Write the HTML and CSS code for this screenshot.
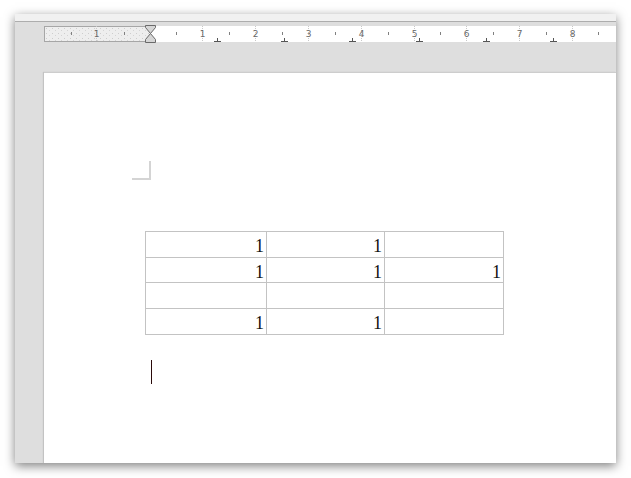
FILE: index.html
```html
<!DOCTYPE html>
<html>
<head>
<meta charset="utf-8">
<link rel="stylesheet" href="styles.css">
</head>
<body>
<div class="window">
  <div class="topstrip"></div>
  <div class="rulerrow">
    <svg class="ruler" width="572" height="22" viewBox="0 0 572 22">
      <defs>
        <pattern id="dots" width="6" height="5" patternUnits="userSpaceOnUse">
          <rect x="2" y="1" width="1" height="1" fill="#cdcdcd"/>
          <rect x="5" y="3" width="1" height="1" fill="#d4d4d4"/>
        </pattern>
      </defs>
      <rect x="0" y="4" width="572" height="16" fill="#ffffff"/>
      <rect x="0.5" y="4.5" width="106" height="15" fill="#eeeeee" stroke="#a6a6a6"/>
      <rect x="1" y="5" width="105" height="14" fill="url(#dots)"/>
      <g stroke="#c8c8c8" stroke-dasharray="1 1">
        <line x1="52.5" y1="4" x2="52.5" y2="20"/>
        <line x1="158.5" y1="4" x2="158.5" y2="20"/>
        <line x1="211.5" y1="4" x2="211.5" y2="20"/>
        <line x1="264.5" y1="4" x2="264.5" y2="20"/>
        <line x1="317.5" y1="4" x2="317.5" y2="20"/>
        <line x1="370.5" y1="4" x2="370.5" y2="20"/>
        <line x1="422.5" y1="4" x2="422.5" y2="20"/>
        <line x1="475.5" y1="4" x2="475.5" y2="20"/>
        <line x1="528.5" y1="4" x2="528.5" y2="20"/>
      </g>
      <g stroke="#808080">
        <line x1="27.5" y1="10" x2="27.5" y2="13"/>
        <line x1="80.5" y1="10" x2="80.5" y2="13"/>
        <line x1="132.5" y1="10" x2="132.5" y2="13"/>
        <line x1="185.5" y1="10" x2="185.5" y2="13"/>
        <line x1="238.5" y1="10" x2="238.5" y2="13"/>
        <line x1="291.5" y1="10" x2="291.5" y2="13"/>
        <line x1="344.5" y1="10" x2="344.5" y2="13"/>
        <line x1="396.5" y1="10" x2="396.5" y2="13"/>
        <line x1="449.5" y1="10" x2="449.5" y2="13"/>
        <line x1="502.5" y1="10" x2="502.5" y2="13"/>
        <line x1="554.5" y1="10" x2="554.5" y2="13"/>
      </g>
      <g class="rnum" text-anchor="middle">
        <text x="52.5" y="14.5">1</text>
        <text x="158.5" y="14.5">1</text>
        <text x="211.5" y="14.5">2</text>
        <text x="264.5" y="14.5">3</text>
        <text x="317.5" y="14.5">4</text>
        <text x="370.5" y="14.5">5</text>
        <text x="422.5" y="14.5">6</text>
        <text x="475.5" y="14.5">7</text>
        <text x="528.5" y="14.5">8</text>
      </g>
      <g stroke="#555555" fill="none">
        <path d="M173.5 16v3.5M170 19.5h7"/>
        <path d="M240.5 16v3.5M237 19.5h7"/>
        <path d="M308.5 16v3.5M305 19.5h7"/>
        <path d="M375.5 16v3.5M372 19.5h7"/>
        <path d="M442.5 16v3.5M439 19.5h7"/>
        <path d="M509.5 16v3.5M506 19.5h7"/>
      </g>
      <polygon points="101.5,3.5 111.5,3.5 111.5,5.5 106.5,11.5 101.5,5.5" fill="#d6d6d6" stroke="#6a6a6a"/>
      <polygon points="106.5,11.5 111.5,17.5 111.5,20.5 101.5,20.5 101.5,17.5" fill="#d6d6d6" stroke="#6a6a6a"/>
    </svg>
  </div>
  <div class="gap"></div>
  <div class="pagerow">
    <div class="page">
      <div class="corner"></div>
      <div class="grid">
        <div class="cell">1</div><div class="cell">1</div><div class="cell"></div>
        <div class="cell">1</div><div class="cell">1</div><div class="cell">1</div>
        <div class="cell"></div><div class="cell"></div><div class="cell"></div>
        <div class="cell">1</div><div class="cell">1</div><div class="cell"></div>
      </div>
      <div class="caret"></div>
    </div>
  </div>
</div>
</body>
</html>
```

FILE: styles.css
```css
html, body {
  margin: 0;
  padding: 0;
  background: #ffffff;
}
body {
  width: 631px;
  height: 478px;
  overflow: hidden;
  padding-top: 14px;
  padding-left: 15px;
  box-sizing: border-box;
}
.window {
  width: 601px;
  height: 449px;
  background: #dedede;
  box-shadow: 0 3px 10px rgba(0, 0, 0, 0.5);
  overflow: hidden;
}
.topstrip {
  height: 7px;
  background: #f1f1f1;
  border-bottom: 1px solid #adadad;
}
.rulerrow {
  height: 22px;
  padding-left: 29px;
}
.ruler {
  display: block;
}
.rnum {
  font-family: "DejaVu Sans", sans-serif;
  font-size: 9px;
  fill: #6a6a6a;
}
.gap {
  height: 28px;
}
.pagerow {
  padding-left: 29px;
  height: 391px;
}
.page {
  width: 572px;
  height: 391px;
  background: #ffffff;
  box-sizing: border-box;
  border-top: 1px solid #cdcdcd;
  padding-top: 88px;
  box-shadow: -1px 0 1px rgba(0, 0, 0, 0.12);
}
.corner {
  margin-left: 88px;
  width: 17px;
  height: 17px;
  border-right: 2px solid #d4d4d4;
  border-bottom: 2px solid #d4d4d4;
}
.grid {
  margin-top: 51px;
  margin-left: 101px;
  width: 359px;
  box-sizing: border-box;
  display: grid;
  grid-template-columns: 120px 117px 118px;
  grid-template-rows: 25px 24px 25px 25px;
  gap: 1px;
  padding: 1px;
  background: #c3c3c3;
}
.cell {
  background: #ffffff;
  text-align: right;
  font-family: "Liberation Serif", serif;
  font-size: 18px;
  line-height: 18px;
  color: #141414;
  padding: 5px 2px 0 0;
  box-sizing: border-box;
}
.caret {
  margin-top: 25px;
  margin-left: 107px;
  width: 1px;
  height: 24px;
  background: #2a0a0a;
}
```
